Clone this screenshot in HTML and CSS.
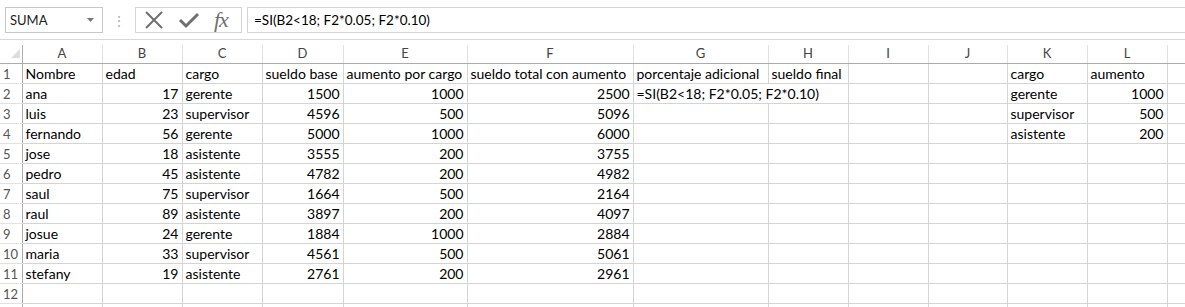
FILE: index.html
```html
<!DOCTYPE html>
<html lang="es">
<head>
  <meta charset="UTF-8">
  <title>Libro1 - Excel</title>
  <link rel="stylesheet" href="styles.css">
</head>
<body>
  <div class="formula-bar">
    <div class="name-box">
      <span class="name-box__text">SUMA</span>
      <svg class="name-box__arrow" width="7" height="4" viewBox="0 0 7 4"><path d="M0 0h7L3.5 4z" fill="#777"/></svg>
    </div>
    <div class="grip">&#8942;</div>
    <div class="fx-box">
      <svg class="fx-box__icon" width="20" height="20" viewBox="0 0 20 20"><path d="M2 2l16 16M18 2L2 18" stroke="#6f6f6f" stroke-width="2" fill="none"/></svg>
      <svg class="fx-box__icon" width="22" height="20" viewBox="0 0 22 20"><path d="M2 10l6 6L20 4" stroke="#6f6f6f" stroke-width="3" fill="none"/></svg>
      <span class="fx-box__fx">fx</span>
    </div>
    <div class="formula-input">=SI(B2&lt;18; F2*0.05; F2*0.10)</div>
  </div>

  <table class="sheet">
    <colgroup>
      <col class="col-rh">
      <col class="col-a"><col class="col-b"><col class="col-c"><col class="col-d">
      <col class="col-e"><col class="col-f"><col class="col-g"><col class="col-h">
      <col class="col-i"><col class="col-j"><col class="col-k"><col class="col-l">
      <col class="col-m">
    </colgroup>
    <thead>
      <tr>
        <th class="corner"><svg width="9" height="9" viewBox="0 0 9 9"><path d="M9 0v9H0z" fill="#dcdcdc"/></svg></th>
        <th>A</th><th>B</th><th>C</th><th>D</th><th>E</th><th>F</th><th>G</th>
        <th>H</th><th>I</th><th>J</th><th>K</th><th>L</th><th></th>
      </tr>
    </thead>
    <tbody>
      <tr><th>1</th><td>Nombre</td><td>edad</td><td>cargo</td><td>sueldo base</td><td>aumento por cargo</td><td>sueldo total con aumento</td><td>porcentaje adicional</td><td>sueldo final</td><td></td><td></td><td>cargo</td><td>aumento</td><td></td></tr>
      <tr><th>2</th><td>ana</td><td class="num">17</td><td>gerente</td><td class="num">1500</td><td class="num">1000</td><td class="num">2500</td><td class="editing" colspan="2">=SI(B2&lt;18; F2*0.05; F2*0.10)</td><td></td><td></td><td>gerente</td><td class="num">1000</td><td></td></tr>
      <tr><th>3</th><td>luis</td><td class="num">23</td><td>supervisor</td><td class="num">4596</td><td class="num">500</td><td class="num">5096</td><td></td><td></td><td></td><td></td><td>supervisor</td><td class="num">500</td><td></td></tr>
      <tr><th>4</th><td>fernando</td><td class="num">56</td><td>gerente</td><td class="num">5000</td><td class="num">1000</td><td class="num">6000</td><td></td><td></td><td></td><td></td><td>asistente</td><td class="num">200</td><td></td></tr>
      <tr><th>5</th><td>jose</td><td class="num">18</td><td>asistente</td><td class="num">3555</td><td class="num">200</td><td class="num">3755</td><td></td><td></td><td></td><td></td><td></td><td></td><td></td></tr>
      <tr><th>6</th><td>pedro</td><td class="num">45</td><td>asistente</td><td class="num">4782</td><td class="num">200</td><td class="num">4982</td><td></td><td></td><td></td><td></td><td></td><td></td><td></td></tr>
      <tr><th>7</th><td>saul</td><td class="num">75</td><td>supervisor</td><td class="num">1664</td><td class="num">500</td><td class="num">2164</td><td></td><td></td><td></td><td></td><td></td><td></td><td></td></tr>
      <tr><th>8</th><td>raul</td><td class="num">89</td><td>asistente</td><td class="num">3897</td><td class="num">200</td><td class="num">4097</td><td></td><td></td><td></td><td></td><td></td><td></td><td></td></tr>
      <tr><th>9</th><td>josue</td><td class="num">24</td><td>gerente</td><td class="num">1884</td><td class="num">1000</td><td class="num">2884</td><td></td><td></td><td></td><td></td><td></td><td></td><td></td></tr>
      <tr><th>10</th><td>maria</td><td class="num">33</td><td>supervisor</td><td class="num">4561</td><td class="num">500</td><td class="num">5061</td><td></td><td></td><td></td><td></td><td></td><td></td><td></td></tr>
      <tr><th>11</th><td>stefany</td><td class="num">19</td><td>asistente</td><td class="num">2761</td><td class="num">200</td><td class="num">2961</td><td></td><td></td><td></td><td></td><td></td><td></td><td></td></tr>
      <tr><th>12</th><td></td><td></td><td></td><td></td><td></td><td></td><td></td><td></td><td></td><td></td><td></td><td></td><td></td></tr>
      <tr class="cut"><th></th><td></td><td></td><td></td><td></td><td></td><td></td><td></td><td></td><td></td><td></td><td></td><td></td><td></td></tr>
    </tbody>
  </table>
</body>
</html>
```

FILE: styles.css
```css
/* General styles */
body {
  margin: 0;
  background: #fff;
  font-family: Lato, "Open Sans", sans-serif;
  color: #000;
  overflow: hidden;
}

/* Formula bar */
.formula-bar {
  display: flex;
  align-items: center;
  height: 40px;
  padding: 1px 0 0 5px;
  border-bottom: 1px solid #d8d8d8;
  box-sizing: border-box;
}

.name-box {
  display: flex;
  align-items: center;
  justify-content: space-between;
  width: 98px;
  height: 26px;
  border: 1px solid #c6c6c6;
  box-sizing: border-box;
  padding: 0 8px 0 4px;
  font-size: 13px;
  color: #222;
}

.grip {
  width: 32px;
  text-align: center;
  color: #b0b0b0;
  font-size: 14px;
}

.fx-box {
  display: flex;
  align-items: center;
  gap: 14px;
  width: 107px;
  height: 26px;
  border: 1px solid #d4d4d4;
  box-sizing: border-box;
  padding: 0 0 0 8px;
}

.fx-box__fx {
  font-family: "Liberation Serif", serif;
  font-style: italic;
  font-size: 22px;
  color: #6f6f6f;
  letter-spacing: -1px;
  line-height: 1;
}

.formula-input {
  flex: 1;
  height: 26px;
  margin-left: 5px;
  border: 1px solid #d4d4d4;
  border-right: 0;
  box-sizing: border-box;
  padding: 4px 0 0 6px;
  font-size: 13.5px;
}

/* Sheet grid */
.sheet {
  margin-top: 5px;
  border-collapse: collapse;
  table-layout: fixed;
  width: 1185px;
  font-size: 14px;
}

.col-rh { width: 22px; }
.col-a, .col-b, .col-c, .col-h, .col-i, .col-k, .col-l { width: 80px; }
.col-d { width: 81px; }
.col-e { width: 124px; }
.col-f { width: 166px; }
.col-g { width: 135px; }
.col-j { width: 79px; }
.col-m { width: 18px; }

.sheet th,
.sheet td {
  padding: 0 3px;
  white-space: nowrap;
  overflow: hidden;
  border-right: 1px solid #d4d4d4;
  border-bottom: 1px solid #d4d4d4;
  box-sizing: border-box;
}

.sheet td {
  height: 20px;
  line-height: 18px;
  padding-top: 1px;
}

.sheet thead th {
  height: 18px;
  font-weight: normal;
  font-size: 13px;
  color: #444;
  border-right-color: #e1e1e1;
  border-bottom: 1px solid #ababab;
  line-height: 17px;
}

.sheet thead .corner {
  text-align: right;
  padding: 0 2px 0 0;
  border-right: 1px solid #ababab;
}

.sheet tbody th {
  font-weight: normal;
  font-size: 13px;
  color: #555;
  text-align: left;
  padding-left: 3px;
  padding-top: 1px;
  line-height: 18px;
  border-right: 1px solid #ababab;
  border-bottom-color: #e1e1e1;
}

.sheet .num {
  text-align: right;
}

.sheet .editing {
  overflow: visible;
}

.sheet .cut td,
.sheet .cut th {
  height: 4px;
  padding: 0;
  line-height: 0;
  border-bottom: 0;
}
```
